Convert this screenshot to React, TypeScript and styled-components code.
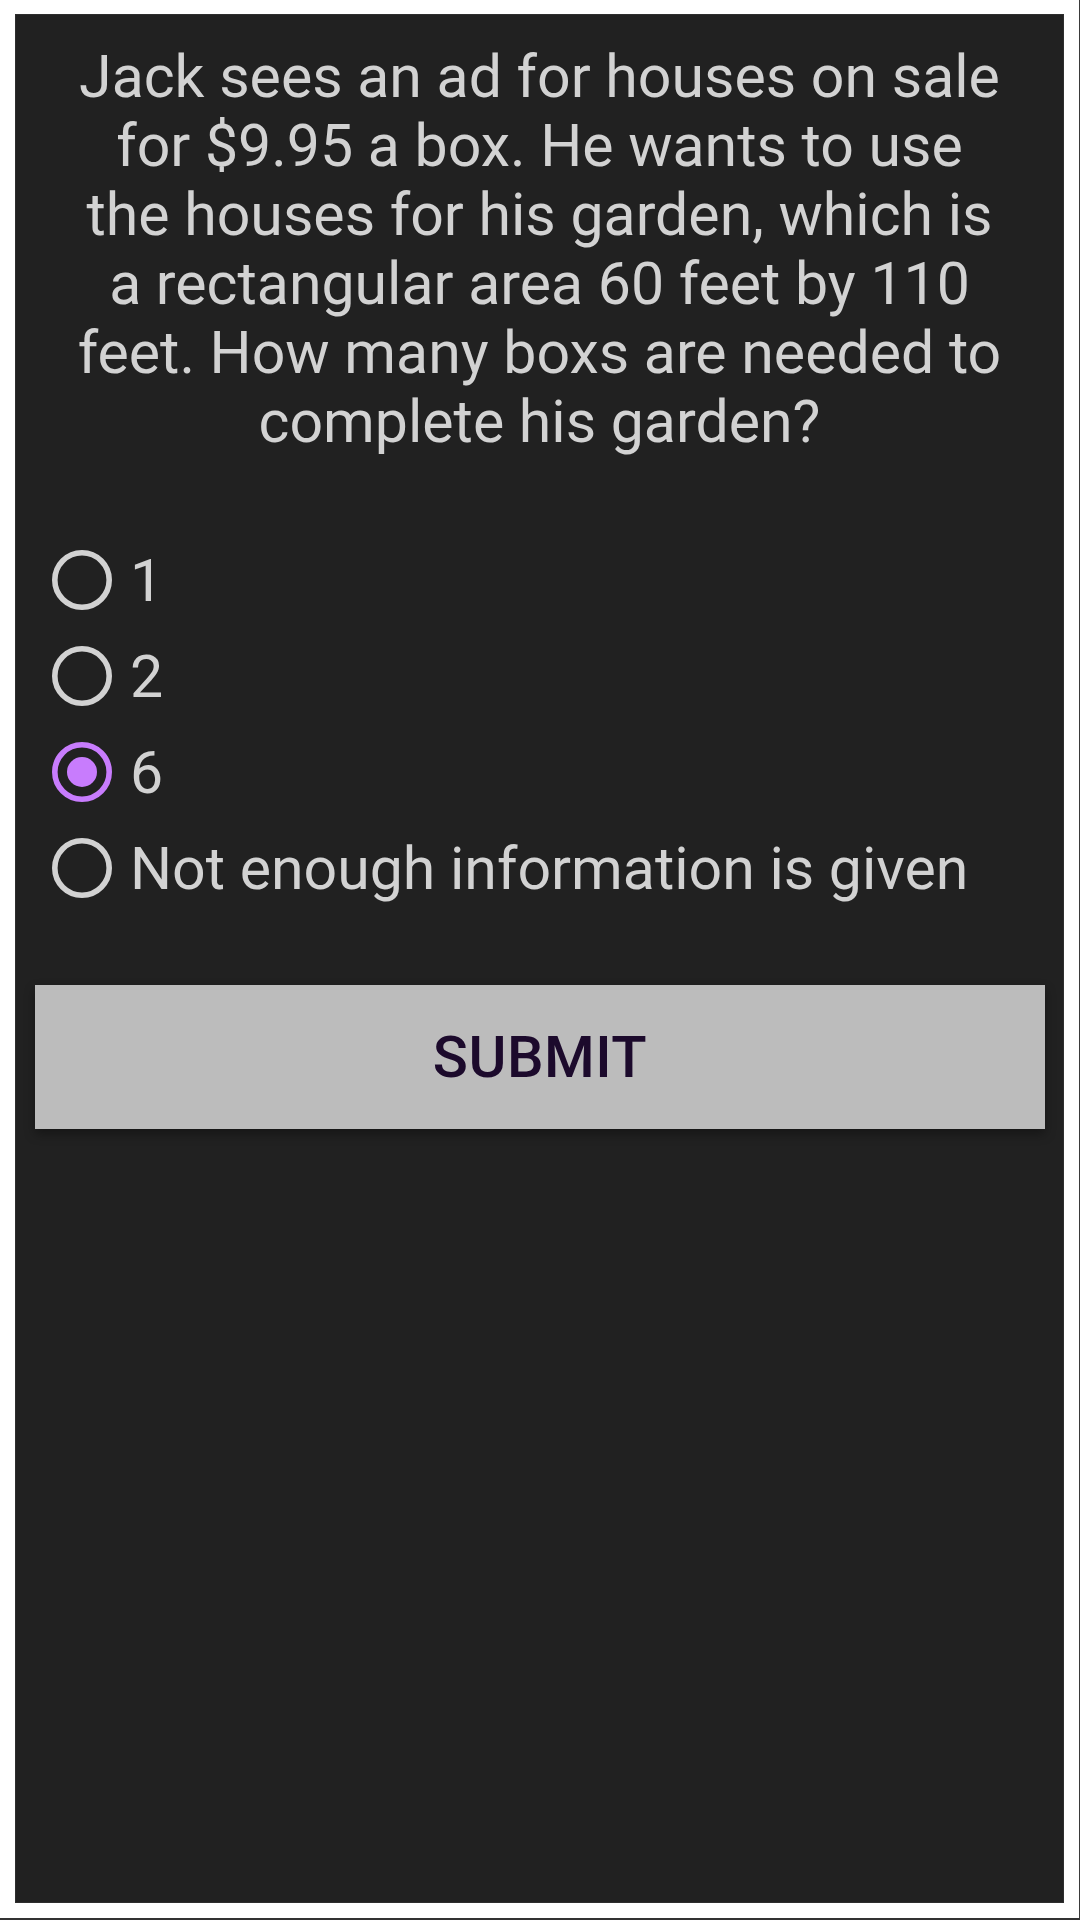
import React, { useState } from "react";
import styled, { createGlobalStyle } from "styled-components";

const GlobalStyle = createGlobalStyle`
  html, body {
    margin: 0;
    padding: 0;
    background: #ffffff;
  }
  * { box-sizing: border-box; }
`;

const Screen = styled.div`
  width: 1080px;
  height: 1920px;
  padding: 14px 15px 16px 15px;
  border-right: 1px solid #3a3a3a;
  border-bottom: 2px solid #333333;
  background: #ffffff;
  display: flex;
`;

const Panel = styled.main`
  width: 1049px;
  height: 1889px;
  background: #212121;
  border: 1px solid #2e2e2e;
  display: flex;
  flex-direction: column;
  font-family: Roboto, "Liberation Sans", sans-serif;
`;

const Question = styled.p`
  margin: 0;
  padding: 27px 56px 0;
  color: #d2d2d2;
  font-size: 59px;
  line-height: 69px;
  text-align: center;
`;

const Options = styled.div`
  margin-top: 76px;
  padding-left: 36px;
  display: flex;
  flex-direction: column;
`;

const Row = styled.label`
  height: 96px;
  display: flex;
  align-items: center;
  gap: 18px;
  cursor: pointer;
`;

const RadioIcon = styled.svg`
  width: 60px;
  height: 60px;
  flex: none;
`;

const OptionText = styled.span`
  color: #d2d2d2;
  font-size: 59px;
  line-height: 69px;
`;

const SubmitButton = styled.button`
  margin: 69px 18px 0 19px;
  height: 144px;
  border: none;
  border-radius: 0;
  background: #bcbcbc;
  color: #1c0a2c;
  font-family: Roboto, "Liberation Sans", sans-serif;
  font-weight: 500;
  font-size: 58px;
  letter-spacing: 0.5px;
  box-shadow: 0 5px 10px rgba(0, 0, 0, 0.35);
  cursor: pointer;
`;

const Radio: React.FC<{ checked: boolean }> = ({ checked }) => {
  const color = checked ? "#c87cfd" : "#d2d2d2";
  return (
    <RadioIcon viewBox="0 0 60 60">
      <circle cx="30" cy="30" r="27.2" fill="none" stroke={color} strokeWidth="5.6" />
      {checked && <circle cx="30" cy="30" r="15" fill={color} />}
    </RadioIcon>
  );
};

const options = ["1", "2", "6", "Not enough information is given"];

export default function App() {
  const [selected, setSelected] = useState(2);
  return (
    <>
      <GlobalStyle />
      <Screen>
        <Panel>
          <Question>
            Jack sees an ad for houses on sale for $9.95 a box. He wants to use the
            houses for his garden, which is a rectangular area 60 feet by 110 feet.
            How many boxs are needed to complete his garden?
          </Question>
          <Options>
            {options.map((o, i) => (
              <Row key={o} onClick={() => setSelected(i)}>
                <Radio checked={selected === i} />
                <OptionText>{o}</OptionText>
              </Row>
            ))}
          </Options>
          <SubmitButton>SUBMIT</SubmitButton>
        </Panel>
      </Screen>
    </>
  );
}
